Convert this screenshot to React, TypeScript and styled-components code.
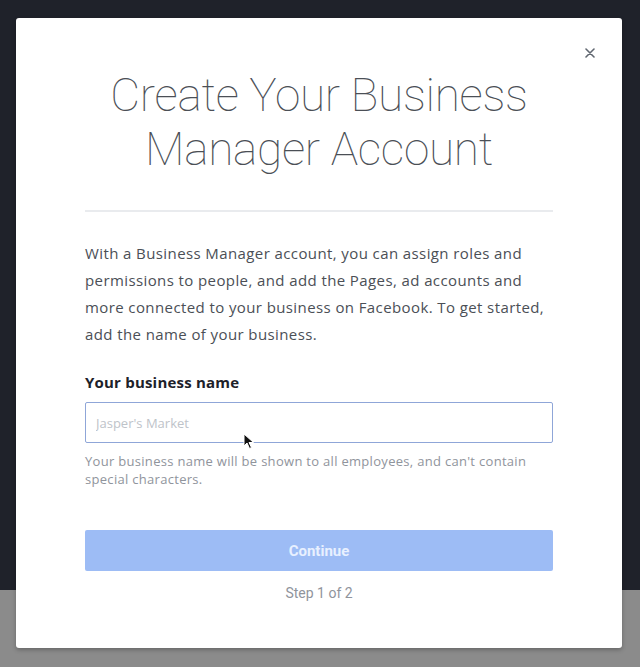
import React from "react";
import styled, { createGlobalStyle } from "styled-components";

const GlobalStyle = createGlobalStyle`
  html, body {
    margin: 0;
    padding: 0;
  }
  body {
    width: 640px;
    height: 667px;
    overflow: hidden;
    background: linear-gradient(to bottom, #1f222a 0, #1f222a 590px, #8b8b8b 590px, #8b8b8b 100%);
    font-family: "Open Sans", "Roboto", sans-serif;
  }
`;

const Page = styled.div`
  padding: 18px 18px 0 16px;
`;

const Modal = styled.div`
  position: relative;
  width: 606px;
  height: 630px;
  box-sizing: border-box;
  background: #ffffff;
  border-radius: 3px;
  box-shadow: 0 2px 4px rgba(0, 0, 0, 0.25);
  padding: 50px 69px 0 69px;
  display: flex;
  flex-direction: column;
`;

const CloseButton = styled.button`
  position: absolute;
  top: 25px;
  right: 22px;
  width: 20px;
  height: 20px;
  padding: 0;
  border: none;
  background: none;
  display: flex;
  align-items: center;
  justify-content: center;
  cursor: pointer;
`;

const Title = styled.h1`
  margin: 0;
  font-family: "Roboto", "Lato", sans-serif;
  font-weight: 100;
  font-size: 46px;
  line-height: 54px;
  color: #4b4f56;
  text-align: center;
  letter-spacing: -0.3px;
`;

const Divider = styled.hr`
  margin: 34px 0 0 0;
  border: none;
  border-top: 2px solid #e9ebee;
`;

const Intro = styled.p`
  margin: 28px -8px 0 0;
  font-family: "Open Sans", "Roboto", sans-serif;
  font-size: 15px;
  line-height: 27px;
  color: #4b4f56;
  letter-spacing: 0.4px;
`;

const Label = styled.label`
  display: block;
  margin-top: 24px;
  font-family: "Open Sans", "Roboto", sans-serif;
  font-weight: 700;
  font-size: 15px;
  line-height: 20px;
  color: #1d2129;
  letter-spacing: 0.2px;
`;

const InputWrap = styled.div`
  position: relative;
  margin-top: 10px;
`;

const Input = styled.input`
  display: block;
  width: 100%;
  height: 41px;
  box-sizing: border-box;
  padding: 0 10px;
  border: 1px solid #8fa6d8;
  border-radius: 2px;
  font-family: "Open Sans", "Roboto", sans-serif;
  font-size: 13px;
  color: #1d2129;
  outline: none;
  &::placeholder {
    color: #bec3c9;
  }
`;

const Cursor = styled.svg`
  position: absolute;
  left: 158px;
  top: 31px;
`;

const Help = styled.p`
  margin: 9px 0 0 0;
  font-size: 13px;
  line-height: 18px;
  color: #90949c;
  letter-spacing: 0.3px;
`;

const ContinueButton = styled.button`
  margin-top: 42px;
  height: 41px;
  width: 100%;
  border: none;
  border-radius: 2px;
  background: #9dbcf5;
  color: #e8f0ff;
  font-family: "Roboto", "Liberation Sans", sans-serif;
  font-weight: 700;
  font-size: 15px;
`;

const Step = styled.div`
  margin-top: 14px;
  text-align: center;
  font-family: "Roboto", "Liberation Sans", sans-serif;
  font-size: 14px;
  color: #90949c;
`;

export default function App() {
  return (
    <>
      <GlobalStyle />
      <Page>
        <Modal>
          <CloseButton aria-label="Close">
            <svg width="10" height="10" viewBox="0 0 10 10">
              <path d="M1 1L9 9M9 1L1 9" stroke="#606770" strokeWidth="1.6" strokeLinecap="round" />
            </svg>
          </CloseButton>
          <Title>
            Create Your Business
            <br />
            Manager Account
          </Title>
          <Divider />
          <Intro>
            With a Business Manager account, you can assign roles and
            permissions to people, and add the Pages, ad accounts and more
            connected to your business on Facebook. To get started, add the
            name of your business.
          </Intro>
          <Label htmlFor="bizname">Your business name</Label>
          <InputWrap>
            <Input id="bizname" placeholder="Jasper's Market" />
            <Cursor width="12" height="17" viewBox="0 0 12 17">
              <path d="M1 1L1 13L4 10L6.5 15.5L8.5 14.5L6 9.5L10.5 9.5Z" fill="#111" stroke="#fff" strokeWidth="1" />
            </Cursor>
          </InputWrap>
          <Help>
            Your business name will be shown to all employees, and can't
            contain special characters.
          </Help>
          <ContinueButton>Continue</ContinueButton>
          <Step>Step 1 of 2</Step>
        </Modal>
      </Page>
    </>
  );
}
